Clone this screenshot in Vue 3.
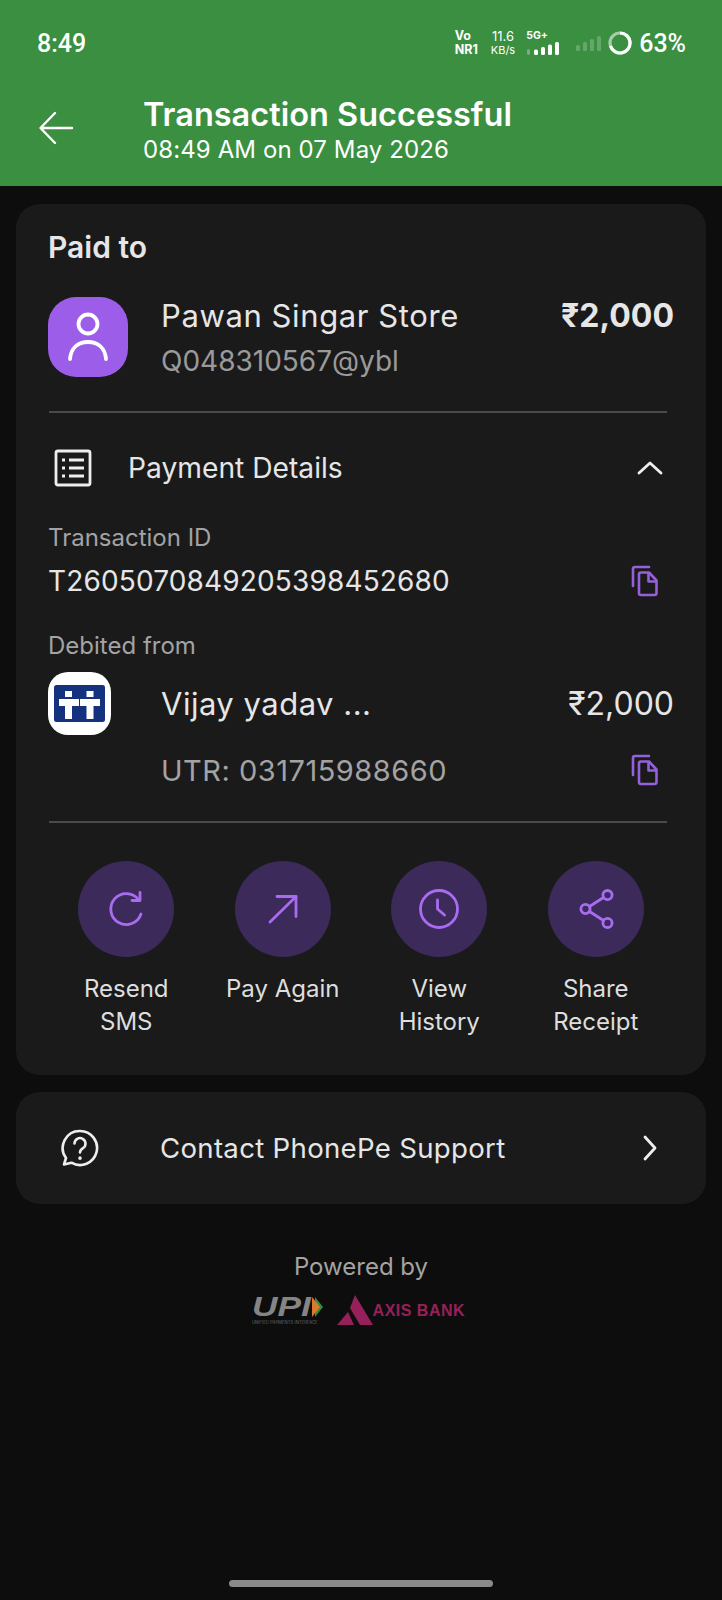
<template>
  <div class="page">
    <header class="top">
      <div class="status">
        <span class="clock">8:49</span>
        <div class="status-right">
          <div class="mini bold"><span>Vo</span><span>NR1</span></div>
          <div class="mini speed"><span class="speed-num">11.6</span><span>KB/s</span></div>
          <div class="net">
            <span class="net-label">5G+</span>
            <svg width="36" height="14" viewBox="0 0 34 14" fill="#fff">
              <rect x="0" y="7" width="3" height="6" rx="1.5" opacity=".3" />
              <rect x="7" y="7.5" width="4" height="5.5" rx="1.5" />
              <rect x="14" y="5" width="4" height="8" rx="1.5" />
              <rect x="21" y="2.5" width="4" height="10.5" rx="1.5" />
              <rect x="28" y="0" width="4" height="13" rx="1.5" />
            </svg>
          </div>
          <svg class="sim2" width="26" height="18" viewBox="0 0 26 18" fill="#fff" opacity=".22">
            <rect x="0" y="11" width="4" height="6" rx="1.5" />
            <rect x="7" y="8" width="4" height="9" rx="1.5" />
            <rect x="14" y="5" width="4" height="12" rx="1.5" />
            <rect x="21" y="2" width="4" height="15" rx="1.5" />
          </svg>
          <svg width="24" height="24" viewBox="0 0 24 24" fill="none">
            <circle cx="12" cy="12" r="10" stroke="#fff" stroke-opacity=".55" stroke-width="3.2" />
            <path d="M12 2a10 10 0 1 1-9.5 13" stroke="#fff" stroke-width="3.2" />
          </svg>
          <span class="pct">63%</span>
        </div>
      </div>
      <div class="title-row">
        <svg class="back" width="36" height="36" viewBox="0 0 36 36" fill="none" stroke="#fff" stroke-width="2.4" stroke-linecap="round" stroke-linejoin="round">
          <path d="M34 18H3M17 3 2.5 18 17 33" />
        </svg>
        <div>
          <h1>Transaction Successful</h1>
          <p class="date">08:49 AM on 07 May 2026</p>
        </div>
      </div>
    </header>

    <section class="card main">
      <h2>Paid to</h2>
      <div class="payee">
        <div class="avatar">
          <svg width="44" height="50" viewBox="0 0 44 50" fill="none" stroke="#fff" stroke-width="3.8" stroke-linecap="round">
            <circle cx="22" cy="12" r="9.5" />
            <path d="M4 47C5 36 12 30 22 30s17 6 18 17" />
          </svg>
        </div>
        <div class="payee-text">
          <div class="payee-name">Pawan Singar Store</div>
          <div class="payee-id">Q048310567@ybl</div>
        </div>
        <div class="payee-amount">₹2,000</div>
      </div>
      <div class="divider"></div>

      <div class="details-head">
        <svg width="38" height="38" viewBox="0 0 38 38" fill="none" stroke="#eee" stroke-width="2.8" stroke-linejoin="round">
          <rect x="2" y="2" width="34" height="34" rx="2" />
          <path d="M15 11h15M15 19h15M15 27h15M8 11h3M8 19h3M8 27h3" />
        </svg>
        <span>Payment Details</span>
        <svg class="chev" width="26" height="16" viewBox="0 0 26 16" fill="none" stroke="#eee" stroke-width="2.8" stroke-linecap="round" stroke-linejoin="round">
          <path d="M2 13 13 3l11 10" />
        </svg>
      </div>

      <div class="label txn-label">Transaction ID</div>
      <div class="txn-row">
        <span class="txn">T2605070849205398452680</span>
        <svg class="copy" width="28" height="32" viewBox="0 0 28 32" fill="none" stroke="#9560dc" stroke-width="2.6" stroke-linejoin="round">
          <path d="M18 2H4a2 2 0 0 0-2 2v17" stroke-linecap="round" />
          <path d="M8 9.5a2 2 0 0 1 2-2h8l7.5 8V28a2 2 0 0 1-2 2H10a2 2 0 0 1-2-2z" />
          <path d="M17.5 8v8.500h8" />
        </svg>
      </div>

      <div class="label debit-label">Debited from</div>
      <div class="bank-row">
        <div class="bank-logo">
          <svg width="51" height="37" viewBox="0 0 51 37">
            <rect width="51" height="37" rx="2.5" fill="#15327f" />
            <g fill="#fff">
              <rect x="11" y="6" width="7" height="6" />
              <rect x="32.5" y="6" width="7" height="6" />
              <rect x="5" y="14" width="20" height="7" />
              <rect x="26" y="14" width="20" height="7" />
              <rect x="11" y="21" width="7" height="13" />
              <rect x="32.5" y="21" width="7" height="13" />
            </g>
          </svg>
        </div>
        <div class="bank-text">
          <div class="bank-top">
            <span class="bank-name">Vijay yadav ...</span>
            <span class="bank-amount">₹2,000</span>
          </div>
          <div class="bank-bottom">
            <span class="utr">UTR: 031715988660</span>
            <svg class="copy" width="28" height="32" viewBox="0 0 28 32" fill="none" stroke="#9560dc" stroke-width="2.6" stroke-linejoin="round">
              <path d="M18 2H4a2 2 0 0 0-2 2v17" stroke-linecap="round" />
              <path d="M8 9.5a2 2 0 0 1 2-2h8l7.5 8V28a2 2 0 0 1-2 2H10a2 2 0 0 1-2-2z" />
              <path d="M17.5 8v8.500h8" />
            </svg>
          </div>
        </div>
      </div>
      <div class="divider second"></div>

      <div class="actions">
        <div v-for="action in actions" :key="action.lines[0]" class="action">
          <div class="circle">
            <svg width="42" height="42" viewBox="0 0 42 42" fill="none" stroke="#a96cf0" stroke-width="2.8" stroke-linecap="round" stroke-linejoin="round">
              <path v-for="d in action.paths" :key="d" :d="d" />
            </svg>
          </div>
          <div class="action-label">
            <div v-for="line in action.lines" :key="line">{{ line }}</div>
          </div>
        </div>
      </div>
    </section>

    <section class="card support">
      <svg class="help" width="38" height="38" viewBox="0 0 38 38" fill="none" stroke="#eee" stroke-width="2.6" stroke-linecap="round" stroke-linejoin="round">
        <path d="M19 2a17 17 0 1 1-8.5 31.700L3 35.500l2-6.500A17 17 0 0 1 19 2z" />
        <path d="M13.5 14.500a5.500 5.500 0 1 1 8.500 4.700c-2 1.300-3 2.300-3 4.300" />
        <path d="M19 29v.2" stroke-width="3.4" />
      </svg>
      <span class="support-text">Contact PhonePe Support</span>
      <svg width="16" height="26" viewBox="0 0 16 26" fill="none" stroke="#eee" stroke-width="2.8" stroke-linecap="round" stroke-linejoin="round">
        <path d="M3 2l10 11L3 24" />
      </svg>
    </section>

    <footer class="powered">
      <div class="powered-text">Powered by</div>
      <div class="logos">
        <div class="upi">
          <div class="upi-top">
            <span class="upi-word">UPI</span>
            <svg width="11" height="20" viewBox="0 0 11 20">
              <path d="M3 0l8 10-8 10z" fill="#3a8a3c" />
              <path d="M0 0l8 10-8 10z" fill="#d97a2c" />
            </svg>
          </div>
          <span class="upi-sub">UNIFIED PAYMENTS INTERFACE</span>
        </div>
        <div class="axis">
          <svg width="36" height="31" viewBox="0 0 36 31" fill="#96205a">
            <path d="M18 0 36 30H23L13 13z" />
            <path d="M11 17 17 30H0z" />
          </svg>
          <span class="axis-word">AXIS BANK</span>
        </div>
      </div>
    </footer>

    <div class="home-wrap"><div class="home-bar"></div></div>
  </div>
</template>

<script setup>
const actions = [
  {
    lines: ['Resend', 'SMS'],
    paths: [
      'M33.5 11.5A15.5 15.5 0 1 0 36 26',
      'M35 4.5v8h-8'
    ]
  },
  {
    lines: ['Pay Again'],
    paths: ['M8 34 34 8.5', 'M15 8.5h19v20']
  },
  {
    lines: ['View', 'History'],
    paths: ['M21 2.5a18.5 18.5 0 1 1 0 37 18.5 18.5 0 0 1 0-37z', 'M19.5 12v9l7 6']
  },
  {
    lines: ['Share', 'Receipt'],
    paths: [
      'M32.5 2.5a4.600 4.600 0 1 1 0 9.200 4.600 4.600 0 0 1 0-9.200z',
      'M10.5 16.400a4.600 4.600 0 1 1 0 9.200 4.600 4.600 0 0 1 0-9.200z',
      'M32.5 30.300a4.600 4.600 0 1 1 0 9.200 4.600 4.600 0 0 1 0-9.200z',
      'M14.5 18.5 28.5 9.5',
      'M14.5 23.5 28.5 32.5'
    ]
  }
]
</script>

<style>
body {
  background: #0d0d0d;
}
</style>

<style scoped>
.page {
  width: 722px;
  height: 1600px;
  background: #0d0d0d;
  font-family: Inter, "Liberation Sans", sans-serif;
  color: #e6e6e6;
  display: flex;
  flex-direction: column;
  overflow: hidden;
}

.top {
  height: 186px;
  flex-shrink: 0;
  background: #3a8f41;
  color: #fff;
}

.status {
  height: 86px;
  box-sizing: border-box;
  padding: 0 36px 0 37px;
  display: flex;
  align-items: center;
  justify-content: space-between;
}

.clock {
  font-size: 25px;
  font-weight: 500;
  font-family: Roboto, Inter, sans-serif;
}

.status-right {
  display: flex;
  align-items: center;
}

.mini {
  display: flex;
  flex-direction: column;
  align-items: center;
  font-size: 11px;
  line-height: 14px;
}

.mini.bold {
  font-size: 12.5px;
  font-weight: 700;
  align-items: flex-start;
  margin-right: 13px;
}

.speed {
  margin-right: 11px;
  font-size: 11px;
}

.speed-num {
  font-size: 13px;
}

.net {
  display: flex;
  flex-direction: column;
  width: 36px;
  margin-right: 14px;
}

.net-label {
  font-size: 10.5px;
  font-weight: 700;
  line-height: 12px;
}

.sim2 {
  margin-right: 6px;
}

.pct {
  font-size: 25px;
  font-weight: 500;
  margin-left: 7px;
  font-family: Roboto, Inter, sans-serif;
}

.title-row {
  display: flex;
  align-items: flex-start;
  padding: 10px 0 0 38px;
  gap: 69px;
}

.back {
  margin-top: 14px;
}

h1 {
  margin: 0;
  font-size: 32.5px;
  line-height: 38px;
  font-weight: 600;
}

.date {
  margin: 2px 0 0;
  font-size: 24px;
  line-height: 28px;
  letter-spacing: 0.1px;
}

.card {
  background: #1a1a1b;
  margin: 0 16px;
  border-radius: 24px;
  flex-shrink: 0;
}

.main {
  margin-top: 18px;
  height: 871px;
  box-sizing: border-box;
  padding: 26px 32px 0;
}

h2 {
  margin: 0;
  font-size: 30px;
  line-height: 34px;
  font-weight: 600;
}

.payee {
  display: flex;
  margin-top: 33px;
}

.avatar {
  width: 80px;
  height: 80px;
  border-radius: 28px;
  background: #9c5de8;
  display: flex;
  align-items: center;
  justify-content: center;
  flex-shrink: 0;
}

.payee-text {
  margin-left: 33px;
  flex: 1;
}

.payee-name {
  font-size: 31px;
  line-height: 38px;
  letter-spacing: 0.6px;
}

.payee-id {
  margin-top: 9px;
  font-size: 28px;
  line-height: 34px;
  color: #9a9a9a;
}

.payee-amount {
  font-size: 32px;
  line-height: 38px;
  font-weight: 700;
}

.divider {
  height: 2px;
  width: 618px;
  margin: 33px 0 0 1px;
  background: #4a4a4a;
}

.details-head {
  display: flex;
  align-items: center;
  margin-top: 36px;
  padding-left: 6px;
  font-size: 28.2px;
  line-height: 38px;
}

.details-head span {
  margin-left: 36px;
  flex: 1;
}

.chev {
  margin-right: 11px;
}

.label {
  font-size: 24px;
  line-height: 30px;
  color: #a3a3a3;
}

.txn-label {
  margin-top: 36px;
}

.txn-row {
  display: flex;
  align-items: center;
  justify-content: space-between;
  margin-top: 12px;
  padding-right: 15px;
  height: 32px;
}

.txn {
  font-size: 28px;
  letter-spacing: 0.15px;
}

.debit-label {
  margin-top: 34px;
}

.bank-row {
  display: flex;
  margin-top: 11px;
}

.bank-logo {
  width: 63px;
  height: 63px;
  background: #fff;
  border-radius: 20px;
  display: flex;
  align-items: center;
  justify-content: center;
  flex-shrink: 0;
}

.bank-text {
  flex: 1;
  margin-left: 50px;
}

.bank-top {
  display: flex;
  justify-content: space-between;
  align-items: center;
  height: 38px;
  margin-top: 12px;
}

.bank-name {
  font-size: 31px;
  letter-spacing: 0.5px;
}

.bank-amount {
  font-size: 32px;
}

.bank-bottom {
  display: flex;
  justify-content: space-between;
  align-items: center;
  margin-top: 32px;
  height: 32px;
  padding-right: 15px;
}

.utr {
  font-size: 29px;
  color: #a3a3a3;
  letter-spacing: 0.5px;
}

.divider.second {
  margin-top: 35px;
}

.actions {
  display: grid;
  grid-template-columns: repeat(4, 1fr);
  margin-top: 38px;
}

.action {
  display: flex;
  flex-direction: column;
  align-items: center;
}

.circle {
  width: 96px;
  height: 96px;
  border-radius: 50%;
  background: #3b2a5a;
  display: flex;
  align-items: center;
  justify-content: center;
}

.action-label {
  margin-top: 15px;
  text-align: center;
  font-size: 24px;
  line-height: 33px;
  color: #dedede;
  white-space: nowrap;
}

.support {
  margin-top: 17px;
  height: 112px;
  display: flex;
  align-items: center;
  padding: 0 48px 0 45px;
}

.support-text {
  flex: 1;
  margin-left: 61px;
  font-size: 27.6px;
  letter-spacing: 0.3px;
}

.powered {
  margin-top: 48px;
  display: flex;
  flex-direction: column;
  align-items: center;
}

.powered-text {
  font-size: 24px;
  line-height: 30px;
  color: #a3a3a3;
}

.logos {
  display: flex;
  align-items: center;
  gap: 14px;
  margin-top: 12px;
  padding-right: 5px;
}

.upi {
  display: flex;
  flex-direction: column;
  align-items: flex-start;
}

.upi-top {
  display: flex;
  align-items: center;
}

.upi-word {
  font-family: "Liberation Sans", sans-serif;
  font-size: 28px;
  line-height: 26px;
  font-weight: 700;
  font-style: italic;
  color: #858585;
  transform: scaleX(1.26);
  transform-origin: left center;
  margin-right: 13px;
}

.upi-sub {
  font-size: 4.3px;
  line-height: 6px;
  color: #666;
  white-space: nowrap;
}

.axis {
  display: flex;
  align-items: center;
}

.axis-word {
  margin-top: 2px;
  font-family: "Liberation Sans", sans-serif;
  font-size: 16px;
  font-weight: 700;
  letter-spacing: 0.5px;
  color: #96205a;
}

.home-wrap {
  margin-top: auto;
  padding-bottom: 13px;
  display: flex;
  justify-content: center;
}

.home-bar {
  width: 264px;
  height: 7px;
  border-radius: 4px;
  background: #8a8a8a;
}
</style>
